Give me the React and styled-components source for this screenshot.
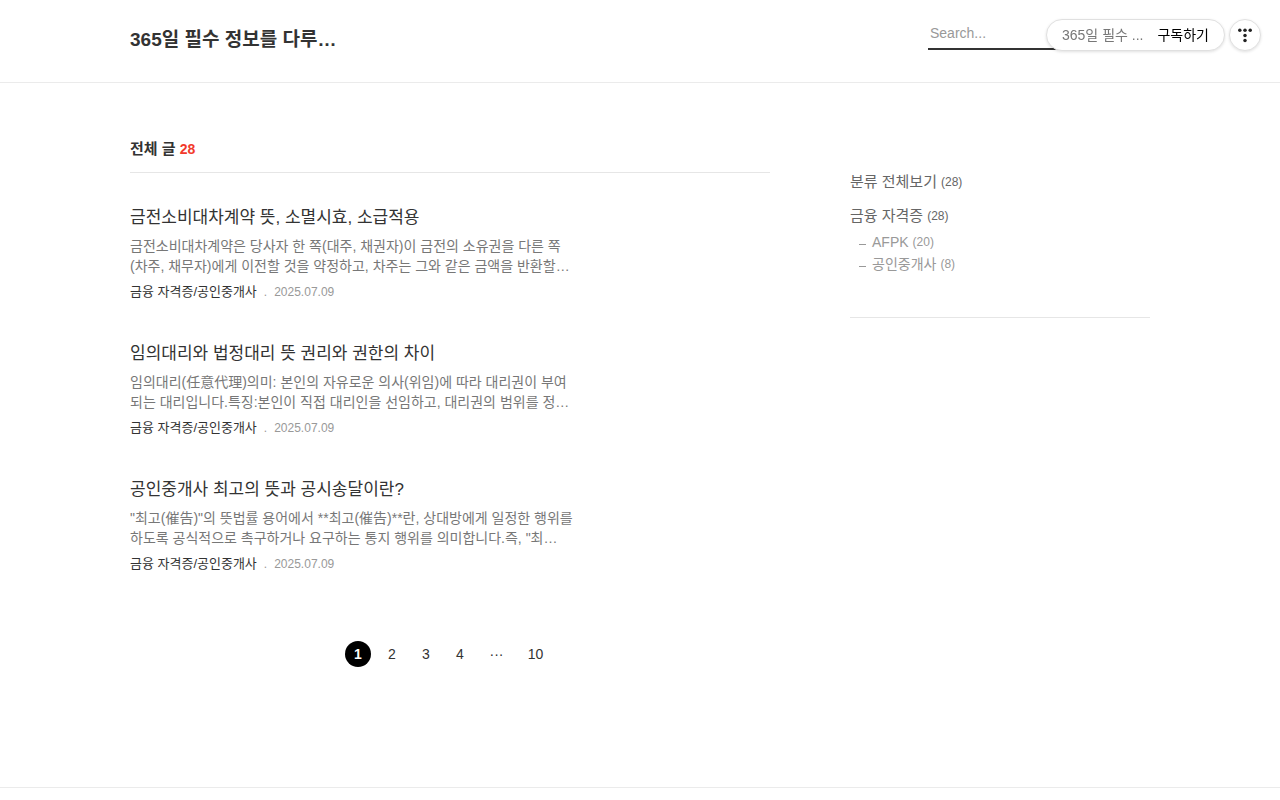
import React from "react";
import styled, { createGlobalStyle } from "styled-components";

const GlobalStyle = createGlobalStyle`
  *, *::before, *::after { box-sizing: border-box; }
  body {
    margin: 0;
    background: #fff;
    color: #333;
    font-family: "Liberation Sans", "Noto Sans CJK KR", sans-serif;
    font-weight: 400;
    font-size: 14px;
    line-height: 20px;
  }
  h1, h2, h3, p, ul { margin: 0; padding: 0; }
  ul { list-style: none; }
  a { color: inherit; text-decoration: none; }
  button, input { font-family: inherit; }
`;

const Page = styled.div`
  display: flex;
  flex-direction: column;
  min-height: 100vh;
`;

const Inner = styled.div`
  width: 100%;
  max-width: 1060px;
  margin: 0 auto;
  padding: 0 20px;
`;

const Header = styled.header`
  border-bottom: 1px solid #ebebeb;
`;

const HeaderRow = styled(Inner)`
  display: flex;
  justify-content: space-between;
  align-items: flex-start;
  padding-top: 20px;
  padding-bottom: 30px;
`;

const SiteTitle = styled.h1`
  padding-top: 8px;
  font-size: 19px;
  line-height: 24px;
  white-space: nowrap;
`;

const SearchInput = styled.input`
  width: 222px;
  height: 30px;
  padding: 0 2px 2px;
  border: 0;
  border-bottom: 2px solid #333;
  border-radius: 0;
  background: transparent;
  font-size: 14px;
  outline: none;
  &::placeholder { color: #999; opacity: 1; }
`;

const FloatingTools = styled.div`
  position: fixed;
  top: 19px;
  right: 19px;
  display: flex;
  gap: 4px;
`;

const ToolButton = styled.button`
  display: flex;
  align-items: center;
  justify-content: center;
  gap: 14px;
  min-width: 32px;
  height: 32px;
  padding: ${(p) => (p.$round ? "0" : "0 15px")};
  border: 1px solid #e0e0e0;
  border-radius: 16px;
  background: #fff;
  box-shadow: 0 1px 3px rgba(0, 0, 0, 0.12);
  color: #000;
  font-size: 14px;
  line-height: 20px;
  white-space: nowrap;
  cursor: pointer;
`;

const BlogName = styled.span`
  color: #777;
`;

const Columns = styled(Inner)`
  display: flex;
  justify-content: space-between;
  gap: 80px;
  flex: 1;
`;

const Main = styled.main`
  flex: 0 1 640px;
  min-width: 0;
  padding-top: 56px;
`;

const ListTitle = styled.h2`
  padding-bottom: 13px;
  border-bottom: 1px solid #e6e6e6;
  font-size: 15px;
  line-height: 20px;
`;

const Total = styled.span`
  color: #f23a2c;
  font-size: 14px;
`;

const Post = styled.article`
  padding-top: 33px;
  padding-bottom: 3px;
`;

const PostTitle = styled.h3`
  padding-bottom: 6px;
  font-size: 17px;
  font-weight: 400;
  line-height: 24px;
`;

const Summary = styled.p`
  color: #777;
  font-size: 14px;
  line-height: 20px;
`;

const Meta = styled.div`
  display: flex;
  align-items: center;
  gap: 7px;
  padding-top: 6px;
  padding-bottom: 4px;
  font-size: 12px;
  line-height: 20px;
`;

const Category = styled.a`
  font-size: 13px;
`;

const Faint = styled.span`
  color: #999;
`;

const Pagination = styled.nav`
  display: flex;
  align-items: center;
  justify-content: center;
  gap: 8px;
  padding: 60px 4px 120px 0;
`;

const PageItem = styled.a`
  display: flex;
  align-items: center;
  justify-content: center;
  min-width: ${(p) => (p.$wide ? "31px" : "26px")};
  height: 26px;
  border-radius: 13px;
  background: ${(p) => (p.$current ? "#000" : "transparent")};
  color: ${(p) => (p.$current ? "#fff" : "#333")};
  font-weight: ${(p) => (p.$current ? 700 : 400)};
  font-size: 14px;
`;

const Sidebar = styled.aside`
  flex: 0 0 300px;
  padding-top: 88px;
`;

const CategoryBox = styled.nav`
  padding-bottom: 42px;
  border-bottom: 1px solid #e6e6e6;
`;

const CategoryLink = styled.a`
  display: flex;
  align-items: center;
  gap: 4px;
  margin-bottom: ${(p) => (p.$sub ? "0" : "12px")};
  color: ${(p) => (p.$sub ? "#999" : "#666")};
  font-size: ${(p) => (p.$sub ? "14px" : "15px")};
  line-height: 22px;
`;

const Count = styled.span`
  font-size: 12px;
`;

const SubList = styled.ul`
  margin-top: -8px;
  padding-left: 9px;
`;

const SubItem = styled.li`
  display: flex;
  align-items: center;
  gap: 6px;
  &::before {
    content: "";
    width: 7px;
    height: 1px;
    margin-top: 4px;
    background: #999;
  }
`;

const Footer = styled.footer`
  min-height: 13px;
  border-top: 1px solid #ebebeb;
`;

const posts = [
  {
    title: "금전소비대차계약 뜻, 소멸시효, 소급적용",
    lines: [
      "금전소비대차계약은 당사자 한 쪽(대주, 채권자)이 금전의 소유권을 다른 쪽",
      "(차주, 채무자)에게 이전할 것을 약정하고, 차주는 그와 같은 금액을 반환할…",
    ],
  },
  {
    title: "임의대리와 법정대리 뜻 권리와 권한의 차이",
    lines: [
      "임의대리(任意代理)의미: 본인의 자유로운 의사(위임)에 따라 대리권이 부여",
      "되는 대리입니다.특징:본인이 직접 대리인을 선임하고, 대리권의 범위를 정…",
    ],
  },
  {
    title: "공인중개사 최고의 뜻과 공시송달이란?",
    lines: [
      "\"최고(催告)\"의 뜻법률 용어에서 **최고(催告)**란, 상대방에게 일정한 행위를",
      "하도록 공식적으로 촉구하거나 요구하는 통지 행위를 의미합니다.즉, \"최…",
    ],
  },
];

const TistoryMark = () => (
  <svg width="16" height="16" viewBox="0 0 16 16" fill="#222" aria-hidden="true">
    <circle cx="2.8" cy="3.2" r="1.75" />
    <circle cx="8" cy="3.2" r="1.75" />
    <circle cx="13.2" cy="3.2" r="1.75" />
    <circle cx="8" cy="8.4" r="1.75" />
    <circle cx="8" cy="13.6" r="1.75" />
  </svg>
);

export default function App() {
  return (
    <Page>
      <GlobalStyle />
      <Header>
        <HeaderRow>
          <SiteTitle><a href="#home">365일 필수 정보를 다루…</a></SiteTitle>
          <SearchInput type="text" placeholder="Search..." aria-label="Search" />
        </HeaderRow>
      </Header>
      <FloatingTools>
        <ToolButton type="button">
          <BlogName>365일 필수 ...</BlogName>
          <span>구독하기</span>
        </ToolButton>
        <ToolButton type="button" $round aria-label="티스토리">
          <TistoryMark />
        </ToolButton>
      </FloatingTools>
      <Columns>
        <Main>
          <ListTitle>전체 글 <Total>28</Total></ListTitle>
          {posts.map((post) => (
            <Post key={post.title}>
              <PostTitle><a href="#post">{post.title}</a></PostTitle>
              <Summary>{post.lines[0]}<br />{post.lines[1]}</Summary>
              <Meta>
                <Category href="#category">금융 자격증/공인중개사</Category>
                <Faint>.</Faint>
                <Faint>2025.07.09</Faint>
              </Meta>
            </Post>
          ))}
          <Pagination aria-label="페이지">
            <PageItem href="#1" $current aria-current="page">1</PageItem>
            <PageItem href="#2">2</PageItem>
            <PageItem href="#3">3</PageItem>
            <PageItem href="#4">4</PageItem>
            <PageItem as="span" $wide>···</PageItem>
            <PageItem href="#10" $wide>10</PageItem>
          </Pagination>
        </Main>
        <Sidebar>
          <CategoryBox aria-label="분류">
            <CategoryLink href="#all">분류 전체보기 <Count>(28)</Count></CategoryLink>
            <CategoryLink href="#finance">금융 자격증 <Count>(28)</Count></CategoryLink>
            <SubList>
              <SubItem><CategoryLink $sub href="#afpk">AFPK <Count>(20)</Count></CategoryLink></SubItem>
              <SubItem><CategoryLink $sub href="#agent">공인중개사 <Count>(8)</Count></CategoryLink></SubItem>
            </SubList>
          </CategoryBox>
        </Sidebar>
      </Columns>
      <Footer />
    </Page>
  );
}
